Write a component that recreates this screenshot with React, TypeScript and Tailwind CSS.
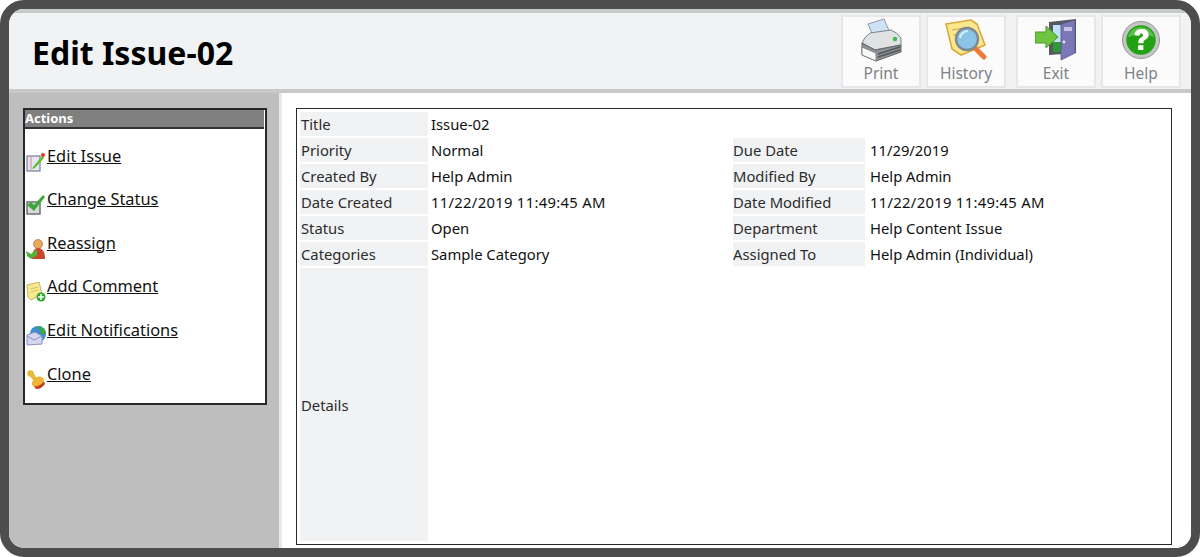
import type { ReactNode } from "react";

const uiFont = "font-['Noto_Sans','DejaVu_Sans',sans-serif]";

function PrintIcon() {
  return (
    <svg width="44" height="44" viewBox="0 0 44 44">
      <path d="M9 6 L25 1 L31 15 L15 20 Z" fill="#cfe3f7" stroke="#8d9aa6" strokeWidth="1" />
      <path d="M3 25 Q5 19 11 15 L32 12 Q38 14 42 20 L42 27 L16 32 Z" fill="#dfe1e2" stroke="#7e8387" strokeWidth="1" />
      <path d="M3 25 L16 32 L42 27 L42 34 L17 43 L3 37 Z" fill="#8d9296" stroke="#5f6468" strokeWidth="1" />
      <path d="M3 29 L17 35 L17 43 L3 37 Z" fill="#f7f8f8" stroke="#777" strokeWidth="0.8" />
      <path d="M19 36 L41 29 M19 39 L41 32" stroke="#53575b" strokeWidth="1.4" />
      <circle cx="36" cy="21" r="2.2" fill="#43b649" />
    </svg>
  );
}

function HistoryIcon() {
  return (
    <svg width="44" height="42" viewBox="0 0 44 42">
      <path d="M2 5 L27 1 L33 5 L41 26 L17 36 L8 30 Z" fill="#fbe88c" stroke="#d9a83a" strokeWidth="1.6" />
      <path d="M8 11 L26 8 M9 16 L16 15 M11 22 L15 21 M13 27 L17 26" stroke="#c7a84a" strokeWidth="1" />
      <path d="M30 28 L40 38" stroke="#ee7b35" strokeWidth="5" strokeLinecap="round" />
      <circle cx="23" cy="20" r="11" fill="#8cc4e8" stroke="#7d8a94" strokeWidth="2.4" />
      <path d="M16 19 A8 8 0 0 1 24 12" stroke="#d6effc" strokeWidth="2" fill="none" />
    </svg>
  );
}

function ExitIcon() {
  return (
    <svg width="42" height="42" viewBox="0 0 42 42">
      <path d="M14 3 L41 0 L41 34 L14 36 Z" fill="#55595f" />
      <rect x="18" y="6" width="10" height="27" fill="#bfe0f6" />
      <rect x="18" y="23" width="10" height="10" fill="#2f9a35" />
      <path d="M26 5 L40 1 L40 34 L26 41 Z" fill="#7b78b8" stroke="#56558c" strokeWidth="0.8" />
      <rect x="29" y="8" width="8" height="4" fill="#c5c6e6" />
      <circle cx="29" cy="23" r="1.4" fill="#e8e8f4" />
      <path d="M0 13 L11 13 L11 7 L23 18 L11 29 L11 24 L0 24 Z" fill="#6cc43f" stroke="#4c9b2a" strokeWidth="1" />
    </svg>
  );
}

function HelpIcon() {
  return (
    <svg width="38" height="38" viewBox="0 0 40 40">
      <circle cx="20" cy="20" r="19.5" fill="#c3c6c5" stroke="#8f9392" strokeWidth="1" />
      <circle cx="20" cy="20" r="15.5" fill="#23a014" />
      <path d="M6 17 A14.5 14.5 0 0 1 34 17 Q20 11 6 17 Z" fill="#58c24a" />
      <path d="M13 15 Q13.5 8.5 20.5 8.5 Q28 8.5 28 14.5 Q28 18.5 24 20 Q22.5 21 22.5 23.5 L17 23.5 Q17 19 20.5 17.2 Q22.5 16 22.3 14.6 Q22 13 20.3 13 Q18.6 13 18.3 15.5 Z" fill="#fff" />
      <rect x="17" y="25.5" width="5.5" height="5" fill="#fff" />
    </svg>
  );
}

function EditIcon() {
  return (
    <svg width="20" height="20" viewBox="0 0 20 20">
      <rect x="1" y="4" width="13" height="15" fill="#e6e6f0" stroke="#7c7c9c" strokeWidth="1.2" />
      <path d="M5 5 V18" stroke="#d88c8c" strokeWidth="1" />
      <path d="M7 15 L16 4 L18 6 L9 16 L6 17 Z" fill="#5cc12f" />
      <circle cx="17" cy="3" r="2" fill="#d93a2b" />
    </svg>
  );
}

function StatusIcon() {
  return (
    <svg width="20" height="20" viewBox="0 0 20 20">
      <rect x="1" y="7" width="13" height="12" fill="#d9dadb" stroke="#66696b" strokeWidth="1.4" />
      <path d="M1 10 L5 7 L8 10 L17 0 L19 2 L8 16 Z" fill="#3fa83a" />
    </svg>
  );
}

function ReassignIcon() {
  return (
    <svg width="20" height="20" viewBox="0 0 20 20">
      <circle cx="12" cy="5" r="4.5" fill="#e8a860" stroke="#b87a3c" strokeWidth="0.8" />
      <path d="M6 20 Q6 9 12 9 Q19 9 19 20 Z" fill="#c9472e" />
      <path d="M0 12 L5 15 L11 10 L11 16 L5 20 L1 17 Z" fill="#4fb53a" />
    </svg>
  );
}

function CommentIcon() {
  return (
    <svg width="20" height="20" viewBox="0 0 20 20">
      <path d="M1 3 L13 0 L16 12 L5 18 L2 15 Z" fill="#f8e88e" stroke="#c4b369" strokeWidth="1" />
      <path d="M4 7 L12 5 M5 10 L12 8" stroke="#c9b864" strokeWidth="0.8" />
      <circle cx="15" cy="15" r="4.5" fill="#2ea62a" />
      <path d="M15 12 V18 M12 15 H18" stroke="#fff" strokeWidth="1.6" />
    </svg>
  );
}

function NotifyIcon() {
  return (
    <svg width="20" height="20" viewBox="0 0 20 20">
      <circle cx="12" cy="8" r="8" fill="#3a8fd0" />
      <path d="M12 0 A8 8 0 0 1 20 8 L15 8 Z" fill="#3fa74a" />
      <path d="M1 9 L9 6 L16 10 L16 18 L1 19 Z" fill="#d5d6ef" stroke="#8d8fc0" strokeWidth="1" />
      <path d="M1 10 L8 14 L16 10" stroke="#8d8fc0" strokeWidth="1" fill="none" />
    </svg>
  );
}

function CloneIcon() {
  return (
    <svg width="20" height="20" viewBox="0 0 20 20">
      <circle cx="4.5" cy="3.5" r="3.2" fill="#e3b93a" />
      <path d="M3 5 L7 2 L11 9 L8 11 Z" fill="#e3b93a" />
      <ellipse cx="12" cy="12" rx="6.5" ry="5" transform="rotate(-35 12 12)" fill="#eeb43a" />
      <path d="M8 16.5 Q13 17 18 11.5 L19 14 Q15 19.5 10 19 Z" fill="#c63d1f" />
    </svg>
  );
}

function ToolButton({ label, icon }: { label: string; icon: ReactNode }) {
  return (
    <button className="w-[80px] h-[73px] bg-[#fbfbfb] border-2 border-[#e6e7e9] flex flex-col items-center justify-between pb-[3px] text-[15.5px] leading-[20px] text-[#7d8389]">
      <span className="h-[46px] flex items-center justify-center">{icon}</span>
      <span>{label}</span>
    </button>
  );
}

const actions: { label: string; icon: ReactNode }[] = [
  { label: "Edit Issue", icon: <EditIcon /> },
  { label: "Change Status", icon: <StatusIcon /> },
  { label: "Reassign", icon: <ReassignIcon /> },
  { label: "Add Comment", icon: <CommentIcon /> },
  { label: "Edit Notifications", icon: <NotifyIcon /> },
  { label: "Clone", icon: <CloneIcon /> },
];

function Label({ children, right }: { children?: ReactNode; right?: boolean }) {
  return (
    <div className={`bg-[#f1f2f4] flex items-center text-[#2c2c2c] ${right ? "" : "pl-[1px]"}`}>{children}</div>
  );
}

function Value({ children, className }: { children?: ReactNode; className?: string }) {
  return <div className={`flex items-center pl-[3px] text-[#111] ${className ?? ""}`}>{children}</div>;
}

export default function App() {
  return (
    <div className={`w-[1200px] h-[557px] bg-white overflow-hidden ${uiFont}`}>
      <div className="w-full h-full border-[9px] border-[#4d4d4d] rounded-[24px] overflow-hidden flex flex-col bg-white">
        <header className="h-[80px] shrink-0 bg-[#f1f2f4] border-t-[4px] border-[#c8c9c9] flex items-start justify-between">
          <h1 className="ml-[23px] mt-[20px] font-bold text-[32px] leading-[40px] text-black">Edit Issue-02</h1>
          <div className="flex mt-[2px] mr-[10px] gap-[5px]">
            <ToolButton label="Print" icon={<PrintIcon />} />
            <div className="mr-[5px]">
              <ToolButton label="History" icon={<HistoryIcon />} />
            </div>
            <ToolButton label="Exit" icon={<ExitIcon />} />
            <ToolButton label="Help" icon={<HelpIcon />} />
          </div>
        </header>
        <div className="h-[4px] shrink-0 bg-[#c8c9c9]" />
        <div className="flex-1 flex min-h-0">
          <aside className="w-[273px] shrink-0 bg-[#bebebe] border-l border-r-[3px] border-l-[#bebebe] border-r-[#e9e9e9] pl-[13px] pt-[15px]">
            <div className="w-[244px] h-[297px] bg-white border-2 border-[#26282a]">
              <div className="h-[19px] mr-[1px] bg-[#808080] border-b-2 border-[#333] text-white font-bold text-[13px] leading-[16px]">
                Actions
              </div>
              <ul className="pt-[15.7px] pl-[1px] flex flex-col gap-[19.6px]">
                {actions.map((a) => (
                  <li key={a.label} className="flex h-[24px] items-start">
                    <span className="mt-[7px] w-[20px] h-[20px] shrink-0">{a.icon}</span>
                    <a className="text-[16.4px] leading-[22px] underline text-[#111] ml-[1px]">{a.label}</a>
                  </li>
                ))}
              </ul>
            </div>
          </aside>
          <main className="flex-1 bg-white pl-[14px] pt-[15px] pr-[19px] pb-[3px] min-w-0">
            <div className="h-full border border-[#26282a] p-[3px] text-[14.8px] leading-[20px]">
              <div className="h-full grid grid-cols-[128px_305px_132px_1fr] grid-rows-[24px_24px_24px_24px_24px_24px_1fr] gap-y-[2px]">
                <Label>Title</Label>
                <Value className="col-span-3">Issue-02</Value>

                <Label>Priority</Label>
                <Value>Normal</Value>
                <Label right>Due Date</Label>
                <Value className="pl-[5px]">11/29/2019</Value>

                <Label>Created By</Label>
                <Value>Help Admin</Value>
                <Label right>Modified By</Label>
                <Value className="pl-[5px]">Help Admin</Value>

                <Label>Date Created</Label>
                <Value className="tracking-[0.3px]">11/22/2019 11:49:45 AM</Value>
                <Label right>Date Modified</Label>
                <Value className="pl-[5px] tracking-[0.3px]">11/22/2019 11:49:45 AM</Value>

                <Label>Status</Label>
                <Value>Open</Value>
                <Label right>Department</Label>
                <Value className="pl-[5px]">Help Content Issue</Value>

                <Label>Categories</Label>
                <Value>Sample Category</Value>
                <Label right>Assigned To</Label>
                <Value className="pl-[5px]">Help Admin (Individual)</Value>

                <Label>Details</Label>
                <Value className="col-span-3" />
              </div>
            </div>
          </main>
        </div>
      </div>
    </div>
  );
}
